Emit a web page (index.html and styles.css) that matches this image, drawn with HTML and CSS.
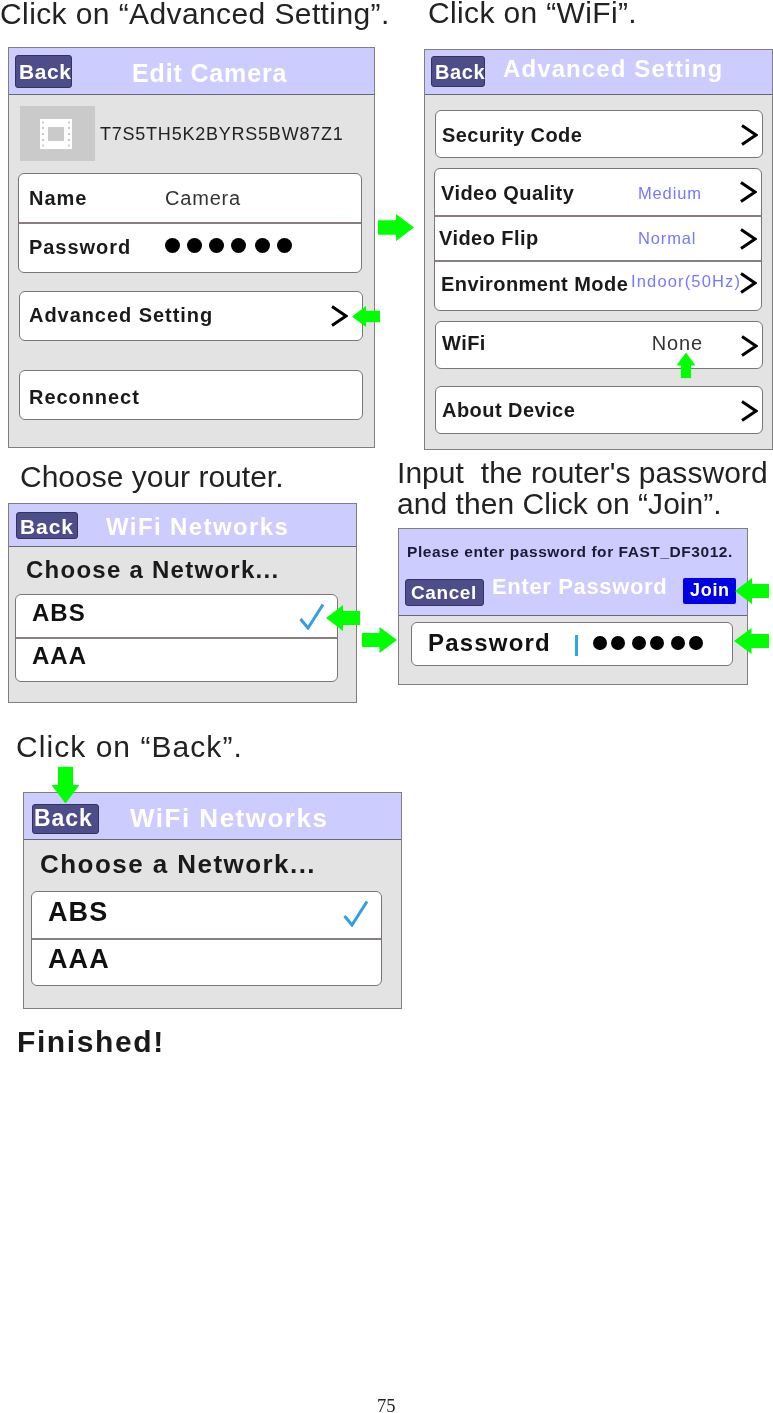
FILE: index.html
```html
<!DOCTYPE html>
<html lang="en">
<head>
    <meta charset="UTF-8">
    <title>WiFi Setup - Page 75</title>
    <link rel="stylesheet" href="styles.css">
</head>
<body>

<svg class="defs" width="0" height="0">
    <symbol id="chevron" viewBox="0 0 18 22">
        <path d="M2 1.5 L16 11 L2 20.5" fill="none" stroke="#000" stroke-width="3"/>
    </symbol>
    <symbol id="check" viewBox="0 0 26 27">
        <path d="M1.5 16 L9 25 L24 1.5" fill="none" stroke="#2f9fe8" stroke-width="3"/>
    </symbol>
    <symbol id="arrow" viewBox="0 0 34 26" preserveAspectRatio="none">
        <path d="M0 13 L17 0 V6 H34 V20 H17 V26 Z" fill="#00ff00"/>
    </symbol>
</svg>

<div class="page">

    <!-- Row 1 -->
    <div class="row row-one">
        <div class="col">
            <p class="caption caption-advanced">Click on “Advanced Setting”.</p>
            <div class="panel panel-camera">
                <div class="bar">
                    <span class="back">Back</span>
                    <span class="bar-title">Edit Camera</span>
                </div>
                <div class="device">
                    <div class="thumb">
                        <svg width="32" height="30" viewBox="0 0 32 30">
                            <path fill="#fff" fill-rule="evenodd" d="M0 0H32V30H0Z M2 2.5V4.5H4V2.5Z M2 8V10H4V8Z M2 14V16H4V14Z M2 20V22H4V20Z M2 25.5V27.5H4V25.5Z M28 2.5V4.5H30V2.5Z M28 8V10H30V8Z M28 14V16H30V14Z M28 20V22H30V20Z M28 25.5V27.5H30V25.5Z M8 8V22H24V8Z"/>
                        </svg>
                    </div>
                    <span class="device-id">T7S5TH5K2BYRS5BW87Z1</span>
                </div>
                <div class="group group-login">
                    <div class="item item-name"><b class="label label-short">Name</b><span class="plain">Camera</span></div>
                    <div class="item item-pass">
                        <b class="label label-short">Password</b>
                        <span class="dots"><i></i><i></i><i></i><i></i><i class="gap"></i><i></i></span>
                    </div>
                </div>
                <div class="group group-adv">
                    <div class="item"><b class="label">Advanced Setting</b><svg class="chevron"><use href="#chevron"/></svg></div>
                </div>
                <div class="group group-reconnect">
                    <div class="item"><b class="label">Reconnect</b></div>
                </div>
            </div>
        </div>

        <div class="col col-right">
            <p class="caption caption-wifi">Click on “WiFi”.</p>
            <div class="panel panel-advanced">
                <div class="bar">
                    <span class="back">Back</span>
                    <span class="bar-title">Advanced Setting</span>
                </div>
                <div class="group setting setting-security">
                    <div class="item"><b class="label">Security Code</b><svg class="chevron"><use href="#chevron"/></svg></div>
                </div>
                <div class="group setting setting-video">
                    <div class="item item-video"><b class="label">Video Quality</b><span class="value">Medium</span><svg class="chevron"><use href="#chevron"/></svg></div>
                    <div class="item item-flip"><b class="label">Video Flip</b><span class="value">Normal</span><svg class="chevron"><use href="#chevron"/></svg></div>
                    <div class="item item-env"><b class="label">Environment Mode</b><span class="value value-env">Indoor(50Hz)</span><svg class="chevron"><use href="#chevron"/></svg></div>
                </div>
                <div class="group setting setting-wifi">
                    <div class="item"><b class="label">WiFi</b><span class="plain plain-none">None</span><svg class="chevron"><use href="#chevron"/></svg></div>
                </div>
                <div class="group setting setting-about">
                    <div class="item"><b class="label">About Device</b><svg class="chevron"><use href="#chevron"/></svg></div>
                </div>
            </div>
        </div>
    </div>

    <!-- Row 2 -->
    <div class="row row-two">
        <div class="col">
            <p class="caption caption-router">Choose your router.</p>
            <div class="panel panel-networks">
                <div class="bar">
                    <span class="back">Back</span>
                    <span class="bar-title">WiFi Networks</span>
                </div>
                <p class="choose">Choose a Network...</p>
                <div class="group network-list">
                    <div class="item item-network"><b class="network">ABS</b><svg class="check"><use href="#check"/></svg></div>
                    <div class="item item-network"><b class="network">AAA</b></div>
                </div>
            </div>
        </div>

        <div class="col col-join">
            <p class="caption caption-join">Input&nbsp; the router's password<br>and then Click on “Join”.</p>
            <div class="panel panel-password">
                <div class="bar bar-tall">
                    <p class="prompt">Please enter password for FAST_DF3012.</p>
                    <div class="bar-line">
                        <span class="back back-cancel">Cancel</span>
                        <span class="bar-title">Enter Password</span>
                        <span class="join">Join</span>
                    </div>
                </div>
                <div class="group password-box">
                    <div class="item">
                        <b class="network">Password</b>
                        <span class="cursor"></span>
                        <span class="dots"><i></i><i></i><i class="gap"></i><i></i><i class="gap"></i><i></i></span>
                    </div>
                </div>
            </div>
        </div>
    </div>

    <!-- Row 3 -->
    <div class="row-three">
        <p class="caption caption-back">Click on “Back”.</p>
        <div class="panel panel-finish">
            <div class="bar">
                <span class="back">Back</span>
                <span class="bar-title">WiFi Networks</span>
            </div>
            <p class="choose">Choose a Network...</p>
            <div class="group network-list">
                <div class="item item-network"><b class="network">ABS</b><svg class="check"><use href="#check"/></svg></div>
                <div class="item item-network"><b class="network">AAA</b></div>
            </div>
        </div>
        <p class="finished">Finished!</p>
    </div>

    <div class="page-number">75</div>

    <!-- Green arrows over the screens -->
    <svg class="arrow arrow-adv"><use href="#arrow"/></svg>
    <svg class="arrow arrow-next"><use href="#arrow"/></svg>
    <svg class="arrow arrow-wifi"><use href="#arrow"/></svg>
    <svg class="arrow arrow-check"><use href="#arrow"/></svg>
    <svg class="arrow arrow-next2"><use href="#arrow"/></svg>
    <svg class="arrow arrow-join"><use href="#arrow"/></svg>
    <svg class="arrow arrow-pass"><use href="#arrow"/></svg>
    <svg class="arrow arrow-back"><use href="#arrow"/></svg>
</div>

</body>
</html>
```

FILE: styles.css
```css
* {
    box-sizing: border-box;
}

body {
    margin: 0;
    background-color: #fff;
    font-family: "Liberation Sans", Arial, sans-serif;
    color: #111;
}

p {
    margin: 0;
}

.defs {
    position: absolute;
}

.page {
    position: relative;
    width: 773px;
    height: 1413px;
    overflow: hidden;
    filter: blur(0.35px);
}

.row {
    display: flex;
}

.row-one {
    height: 458px;
}

.row-two {
    height: 270px;
}

.col {
    flex: none;
}

.col-right {
    margin-left: 49px;
}

.col-join {
    margin-left: 41px;
}

/* Captions */
.caption {
    font-size: 30px;
    line-height: 31px;
    white-space: nowrap;
    color: #222;
}

.caption-advanced {
    height: 47px;
    letter-spacing: 0.4px;
    line-height: 27px;
    width: 375px;
}

.caption-wifi {
    height: 49px;
    line-height: 25px;
    letter-spacing: 0.35px;
    margin-left: 4px;
}

.caption-router {
    height: 45px;
    padding: 3px 0 0 20px;
}

.caption-join {
    height: 70px;
    margin-top: -1px;
    margin-bottom: 1px;
    margin-left: -1px;
    letter-spacing: 0.05px;
}

.caption-back {
    height: 64px;
    padding: 3px 0 0 16px;
    letter-spacing: 1.05px;
}

/* Screens */
.panel {
    flex: none;
    background-color: #e3e3e3;
    border: 1.5px solid #7f7f7f;
}

.panel-camera {
    width: 367px;
    height: 401px;
    margin-left: 8px;
}

.panel-advanced {
    width: 349px;
    height: 401px;
}

.panel-networks {
    width: 349px;
    height: 200px;
    margin-left: 8px;
}

.panel-password {
    width: 350px;
    height: 157px;
}

.panel-finish {
    width: 379px;
    height: 217px;
    margin-left: 23px;
}

.bar {
    display: flex;
    align-items: center;
    height: 47px;
    padding-left: 6px;
    background-color: #ccccff;
    border-bottom: 1.5px solid #666677;
}

.panel-advanced .bar {
    height: 45px;
}

.panel-networks .bar {
    height: 43px;
    padding-left: 7px;
}

.bar-tall {
    display: block;
    height: 87px;
    padding: 0;
}

.bar-title {
    color: #fff;
    font-weight: bold;
    font-size: 24px;
    letter-spacing: 1.3px;
    white-space: nowrap;
}

.panel-camera .bar-title {
    margin: 4px 0 0 60px;
    font-size: 25px;
    letter-spacing: 0.85px;
}

.panel-advanced .bar-title {
    margin-left: 18px;
    margin-bottom: 7px;
    letter-spacing: 1.1px;
}

.panel-networks .bar-title {
    margin: 4px 0 0 28px;
    letter-spacing: 1.4px;
}

.panel-finish .bar-title {
    margin: 4px 0 0 31px;
    font-size: 26px;
    letter-spacing: 1.5px;
}

.back {
    display: block;
    width: 57px;
    height: 33px;
    line-height: 31px;
    padding-left: 3px;
    background-color: #4d4d8a;
    border: 1px solid #33335c;
    border-radius: 3px;
    color: #fff;
    font-weight: bold;
    font-size: 21px;
    letter-spacing: 0.6px;
    white-space: nowrap;
}

.panel-advanced .back {
    width: 54px;
    height: 31px;
    font-size: 20px;
    margin-top: -2px;
}

.panel-networks .back {
    width: 62px;
    height: 27px;
    line-height: 27px;
    margin-top: 1px;
    letter-spacing: 0.9px;
}

.panel-finish .back {
    width: 67px;
    height: 30px;
    line-height: 27px;
    margin-left: 2px;
    margin-top: 6px;
    padding-left: 1px;
    font-size: 23px;
    letter-spacing: 0.9px;
}

.prompt {
    padding: 14px 0 0 8px;
    font-size: 15.5px;
    font-weight: bold;
    line-height: 17px;
    letter-spacing: 0.55px;
    color: #1a1a33;
    white-space: nowrap;
}

.bar-line {
    display: flex;
    align-items: flex-start;
    margin-top: 14px;
    padding-left: 6px;
}

.panel-password .back-cancel {
    width: 79px;
    height: 27px;
    line-height: 26px;
    margin-top: 5px;
    padding-left: 5px;
    font-size: 19px;
}

.panel-password .bar-title {
    margin-left: 8px;
    font-size: 22px;
    letter-spacing: 0.65px;
}

.join {
    width: 53px;
    height: 26px;
    line-height: 25px;
    margin: 4px 0 0 16px;
    text-align: center;
    background-color: #0000e6;
    border-radius: 2px;
    color: #fff;
    font-weight: bold;
    font-size: 18px;
    letter-spacing: 0.7px;
}

/* Device line */
.device {
    display: flex;
    align-items: center;
    margin: 11px 0 0 11px;
}

.thumb {
    display: flex;
    align-items: center;
    justify-content: center;
    width: 75px;
    height: 55px;
    background-color: #cacaca;
    padding-right: 3px;
}

.device-id {
    margin: 1px 0 0 5px;
    font-size: 18px;
    letter-spacing: 0.77px;
    color: #222;
    white-space: nowrap;
}

/* White rounded groups */
.group {
    background-color: #fff;
    border: 1.5px solid #777;
    border-radius: 6px;
    overflow: hidden;
}

.item {
    display: flex;
    align-items: center;
    position: relative;
    height: 47px;
    padding-left: 6px;
}

.item + .item {
    border-top: 2px solid #8a7f7f;
}

.label {
    font-size: 20px;
    letter-spacing: 0.45px;
    white-space: nowrap;
    color: #1a1a1a;
}

.panel-camera .item {
    padding-left: 9px;
}

.panel-camera .label {
    letter-spacing: 0.95px;
}

.panel-camera .label-short {
    width: 137px;
    flex: none;
    padding-left: 1px;
}

.plain {
    font-size: 20px;
    letter-spacing: 0.8px;
    color: #333;
}

.plain-none {
    margin: 0 0 0 166px;
}

.group-login {
    width: 344px;
    height: 100px;
    margin: 12px 0 0 9px;
}

.panel-camera .item-name {
    height: 48px;
}

.panel-camera .item-pass {
    height: 49px;
}

.group-adv,
.group-reconnect {
    width: 344px;
    height: 50px;
    margin-left: 10px;
}

.group-adv {
    margin-top: 18px;
}

.group-reconnect {
    margin-top: 29px;
}

.group-reconnect .item {
    padding-top: 5px;
}

.dots {
    display: flex;
    gap: 7px;
    margin-top: -4px;
}

.dots i {
    width: 15px;
    height: 15px;
    border-radius: 50%;
    background-color: #000;
}

.dots i.gap {
    margin-left: 2px;
}

.chevron {
    position: absolute;
    right: 14px;
    top: 50%;
    width: 18px;
    height: 22px;
    margin-top: -11px;
}

/* Advanced setting list */
.setting {
    width: 328px;
    height: 48px;
    margin: 15px 0 0 10px;
}

.setting .chevron {
    right: 4px;
    margin-top: -12px;
    height: 24px;
}

.setting-security .item {
    padding-top: 2px;
}

.setting-video {
    height: 143px;
    margin: 10px 0 0 9px;
}

.setting-wifi {
    margin-top: 10px;
}

.setting-wifi .item {
    padding-bottom: 4px;
}

.setting-about {
    margin-top: 17px;
}

.item-video {
    height: 46px;
    padding-top: 2px;
}

.item-flip {
    height: 45px;
    padding-left: 4px;
}

.item-env {
    height: 49px;
    padding-bottom: 3px;
}

.setting .item-env .chevron {
    top: 45%;
}

.value {
    font-size: 16.5px;
    letter-spacing: 0.85px;
    color: #7777ff;
    white-space: nowrap;
    position: absolute;
    left: 203px;
}

.value-env {
    left: 196px;
    top: 10px;
    letter-spacing: 1.15px;
}

/* Networks */
.choose {
    padding: 9px 0 0 17px;
    font-size: 24px;
    font-weight: bold;
    line-height: 28px;
    letter-spacing: 1.26px;
    color: #1a1a1a;
}

.network-list {
    width: 323px;
    height: 88px;
    margin: 10px 0 0 6px;
}

.network-list .item {
    height: 42px;
    padding-bottom: 6px;
}

.network {
    font-size: 24px;
    letter-spacing: 1px;
    color: #111;
    padding-left: 10px;
    white-space: nowrap;
}

.check {
    position: absolute;
    right: 12px;
    top: 8px;
    width: 26px;
    height: 27px;
}

.panel-finish .choose {
    padding: 10px 0 0 16px;
    font-size: 26px;
    letter-spacing: 1.45px;
}

.panel-finish .network-list {
    width: 351px;
    height: 95px;
    margin: 13px 0 0 7px;
}

.panel-finish .network-list .item {
    height: 46px;
}

.panel-finish .network {
    font-size: 27px;
    letter-spacing: 1.1px;
}

/* Password field */
.password-box {
    width: 322px;
    height: 44px;
    margin: 6px 0 0 12px;
}

.password-box .item {
    height: 41px;
    padding-bottom: 0;
}

.password-box .network {
    margin-top: -2px;
    letter-spacing: 1.2px;
}

.cursor {
    width: 3px;
    height: 21px;
    margin: 3px 15px 0 24px;
    background-color: #2fa6ea;
}

.password-box .dots {
    gap: 4px;
    margin-top: -1px;
}

.password-box .dots i {
    width: 14px;
    height: 14px;
}

.password-box .dots i.gap {
    margin-left: 3px;
}

/* Third row */
.finished {
    margin: 15px 0 0 17px;
    font-size: 30px;
    font-weight: bold;
    letter-spacing: 1.6px;
    line-height: 36px;
    color: #1a1a1a;
}

.page-number {
    position: absolute;
    left: 377px;
    top: 1399px;
    font-family: "Liberation Serif", serif;
    font-size: 18.5px;
    line-height: 14px;
    color: #222;
}

/* Arrows */
.arrow {
    position: absolute;
    width: 34px;
    height: 26px;
}

.arrow-adv {
    left: 352px;
    top: 306px;
    width: 28px;
    height: 21px;
}

.arrow-next {
    left: 378px;
    top: 214px;
    width: 36px;
    height: 27px;
    transform: scaleX(-1);
}

.arrow-wifi {
    left: 673px;
    top: 356px;
    width: 26px;
    height: 19px;
    transform: rotate(90deg);
}

.arrow-check {
    left: 326px;
    top: 605px;
}

.arrow-next2 {
    left: 362px;
    top: 627px;
    width: 35px;
    transform: scaleX(-1);
}

.arrow-join {
    left: 735px;
    top: 578px;
}

.arrow-pass {
    left: 734px;
    top: 628px;
    width: 35px;
}

.arrow-back {
    left: 47px;
    top: 771px;
    width: 37px;
    height: 28px;
    transform: rotate(-90deg);
}
```
